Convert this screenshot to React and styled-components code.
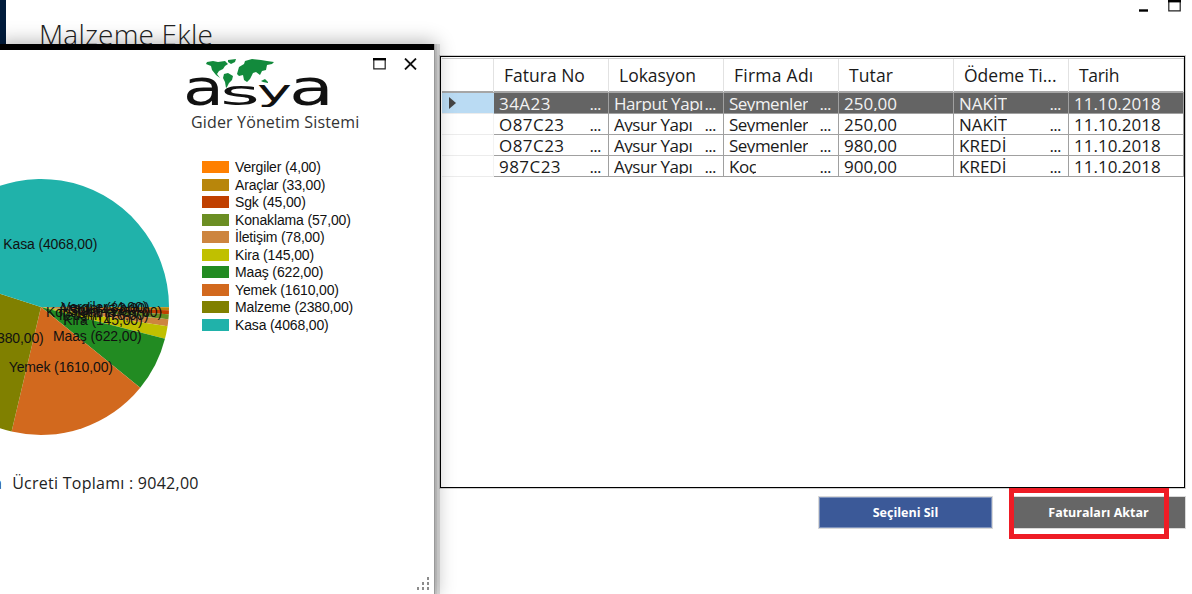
import React from "react";
import styled, { createGlobalStyle } from "styled-components";

const GlobalStyle = createGlobalStyle`
  *, *::before, *::after { box-sizing: border-box; }
  html, body { margin: 0; padding: 0; }
  body {
    background: #fff;
    color: #111;
    font-family: "Open Sans", "Noto Sans", sans-serif;
    overflow: hidden;
  }
`;

const Desktop = styled.div`
  position: relative;
  display: flex;
  width: 1192px;
  height: 594px;
  overflow: hidden;
  background: #fff;
`;

const DesktopEdge = styled.div`
  flex: none;
  width: 6px;
  background: #001b3b;
`;

const MainWindow = styled.main`
  flex: 1;
  display: flex;
  flex-direction: column;
  align-items: flex-end;
  padding-right: 7px;
`;

const MainHeader = styled.header`
  display: flex;
  align-self: stretch;
  justify-content: space-between;
  height: 56px;
  padding: 0 4px 0 33px;
`;

const MainTitle = styled.h1`
  margin: 13px 0 0;
  font-size: 28px;
  line-height: 42px;
  font-weight: 300;
  letter-spacing: 0.2px;
  color: #222;
  white-space: nowrap;
`;

const Grid = styled.section`
  flex: none;
  width: 745px;
  height: 432px;
  padding: 1px 0 0 1px;
  border: 1px solid #000;
  box-shadow: 0 0 0 1px #d0d0d0;
`;

const GridRow = styled.div`
  display: grid;
  grid-template-columns: 52px repeat(6, 115px);
  height: 21px;
  background: ${(p) => (p.$selected ? "#646464" : "#fff")};
  color: ${(p) => (p.$selected ? "#f2f2f2" : "#1a1a1a")};
`;

const GridHead = styled(GridRow)`
  height: 35px;
  border-bottom: 2px solid #a6a6a6;
  border-top: 1px solid #c8c8c8;
`;

const HeadCell = styled.div`
  padding-left: 10px;
  border-right: 1px solid #e2e2e2;
  font-size: 17.5px;
  line-height: 33px;
  letter-spacing: ${(p) => p.$spacing || 0}px;
  white-space: nowrap;
`;

const RowMarker = styled.div`
  display: flex;
  align-items: center;
  padding-left: 7px;
  background: ${(p) => (p.$selected ? "#badbf3" : "#fff")};
  border-bottom: 1px solid #ececec;
  border-right: 1px solid ${(p) => (p.$selected ? "#badbf3" : "#f3f3f3")};
`;

const Cell = styled.div`
  display: flex;
  justify-content: space-between;
  padding: 0 7px 0 5px;
  border-right: 1px solid #a0a0a0;
  border-bottom: 1px solid #a0a0a0;
  font-size: 17px;
`;

const CellText = styled.span`
  height: 18px;
  line-height: 21px;
  overflow: hidden;
  letter-spacing: ${(p) => p.$spacing || 0}px;
  white-space: pre;
`;

const Actions = styled.div`
  position: relative;
  display: flex;
  gap: 20px;
  padding-top: 9px;
`;

const ActionButton = styled.button`
  width: 173px;
  height: 31px;
  padding: 0;
  border: 1px solid ${(p) => (p.$primary ? "#7f93bd" : "#666")};
  outline: 1px solid #d9d9d9;
  background: ${(p) => (p.$primary ? "#3b5998" : "#666")};
  color: #fff;
  font: 700 12.5px/30px "Open Sans", sans-serif;
  letter-spacing: 0;
`;

const Highlight = styled.div`
  position: absolute;
  left: 190px;
  top: 0;
  width: 160px;
  height: 51px;
  border: 5px solid #ee1c25;
`;

const ReportWindow = styled.aside`
  position: absolute;
  left: 0;
  top: 44px;
  width: 434px;
  height: 550px;
  display: flex;
  flex-direction: column;
  border-top: 6px solid #000;
  background: #fff;
  box-shadow: 1px 0 0 #999, 3px 0 0 rgba(0, 0, 0, 0.06), 6px 0 0 rgba(0, 0, 0, 0.12), 0 0 18px 2px rgba(0, 0, 0, 0.3);
`;

const ReportHeader = styled.header`
  display: flex;
  height: 88px;
`;

const Brand = styled.div`
  flex: none;
  display: flex;
  flex-direction: column;
  width: 188px;
  margin-left: 182px;
  padding-top: 7px;
`;

const Tagline = styled.div`
  padding-left: 9px;
  font-size: 16px;
  line-height: 27px;
  letter-spacing: 0.15px;
  color: #333;
  white-space: nowrap;
`;

const WindowControls = styled.div`
  display: flex;
  gap: ${(p) => p.$gap}px;
  padding: ${(p) => p.$top}px 0 0 3px;
`;

const ReportBody = styled.div`
  display: flex;
  height: 328px;
`;

const Chart = styled.svg`
  flex: none;
  width: 202px;
  height: 328px;
  font-family: "Liberation Sans", Arial, sans-serif;
  font-size: 14px;
`;

const Legend = styled.ul`
  display: flex;
  flex-direction: column;
  margin: 20.5px 0 0;
  padding: 0;
  list-style: none;
`;

const LegendItem = styled.li`
  display: flex;
  align-items: center;
  gap: 6px;
  height: 17.5px;
  font: 14px/18.5px "Liberation Sans", Arial, sans-serif;
  letter-spacing: -0.15px;
  white-space: nowrap;
  &::before {
    content: "";
    width: 27px;
    height: 12px;
    background: ${(p) => p.$color};
  }
`;

const Total = styled.div`
  display: flex;
  gap: 10px;
  margin-left: -7px;
  padding-top: 3px;
  font-size: 16px;
  line-height: 28px;
  letter-spacing: 0.26px;
  color: #222;
  white-space: nowrap;
`;

const ResizeGrip = styled.svg`
  align-self: flex-end;
  margin: auto 4px 4px 0;
`;

const expenses = [
  { name: "Vergiler", value: 4, color: "#ff8000" },
  { name: "Araçlar", value: 33, color: "#b8860b" },
  { name: "Sgk", value: 45, color: "#c04000" },
  { name: "Konaklama", value: 57, color: "#6b8e23" },
  { name: "İletişim", value: 78, color: "#cd853f" },
  { name: "Kira", value: 145, color: "#c0c000" },
  { name: "Maaş", value: 622, color: "#228b22" },
  { name: "Yemek", value: 1610, color: "#d2691e" },
  { name: "Malzeme", value: 2380, color: "#808000" },
  { name: "Kasa", value: 4068, color: "#20b2aa" },
];

const caption = (e) => `${e.name} (${e.value},00)`;

const columns = [
  { title: "Fatura No", headSpacing: 0, spacing: 0.45, truncated: true },
  { title: "Lokasyon", headSpacing: 0, spacing: -0.45, truncated: true },
  { title: "Firma Adı", headSpacing: 0.25, spacing: -0.5, truncated: true },
  { title: "Tutar", headSpacing: 0.1, spacing: 0, truncated: false },
  { title: "Ödeme Ti...", headSpacing: 0, spacing: 0, truncated: true },
  { title: "Tarih", headSpacing: -0.3, spacing: 0, truncated: false },
];

const invoices = [
  ["34A23", "Harput Yapı", "Seymenler", "250,00", "NAKİT", "11.10.2018"],
  ["O87C23", "Aysur Yapı", "Seymenler", "250,00", "NAKİT", "11.10.2018"],
  ["O87C23", "Aysur Yapı", "Seymenler", "980,00", "KREDİ", "11.10.2018"],
  ["987C23", "Aysur Yapı", "Koç", "900,00", "KREDİ", "11.10.2018"],
];

function ExpensePie() {
  const cx = 41;
  const cy = 169;
  const r = 128;
  const total = expenses.reduce((s, e) => s + e.value, 0);
  let sum = 0;
  const slices = expenses.map((e) => {
    const a = (sum / total) * Math.PI * 2;
    sum += e.value;
    const b = (sum / total) * Math.PI * 2;
    return { ...e, a, b, mid: (a + b) / 2 };
  });
  const pt = (t, d) => [cx + Math.cos(t) * d, cy + Math.sin(t) * d];
  return (
    <Chart viewBox="0 0 202 328">
      {slices.map((s) => (
        <path
          key={s.name}
          fill={s.color}
          d={`M${cx} ${cy}L${pt(s.a, r)}A${r} ${r} 0 0 1 ${pt(s.b, r)}Z`}
        />
      ))}
      {slices.map((s) => {
        const [x, y] = pt(s.mid, r / 2);
        return (
          <text key={s.name} x={x - 0.8} y={y + 4.9} textAnchor="middle" letterSpacing="-0.13" fill="#111">
            {caption(s)}
          </text>
        );
      })}
    </Chart>
  );
}

function AsyaLogo() {
  return (
    <svg width="150" height="52" viewBox="182 57 150 52">
      <g fill="#128a3c">
        <path d="M207 62l6-1 5 1 7-1 3 3-3 2-2 3-4 2-2 3 3 4-4-3-4-5-1-4-5-2z" />
        <path d="M228 60l8-1-1 3-4 2-3-2z" />
        <path d="M224 74l4-1 5 3-1 4-3 3-2 4-1 1-1-6-2-4z" />
        <path d="M237 74l2-7 5-3 1-3 7-2 9 1 6 1 7 1-2 2-5 1-1 5-4 1-2 4-4-3-3 1-3 6-3 3-3-2-1-5-4 1z" />
        <path d="M261 81l4-2 3 3v1l-5-1z" />
      </g>
      <g fill="#111" fontFamily="DejaVu Sans">
        <text y="105">
          <tspan x="183" fontSize="50" textLength="41" lengthAdjust="spacingAndGlyphs">a</tspan>
          <tspan x="220" fontSize="34" textLength="40" lengthAdjust="spacingAndGlyphs">s</tspan>
          <tspan x="257" y="101" fontSize="28" textLength="35" lengthAdjust="spacingAndGlyphs">y</tspan>
          <tspan x="289" y="105" fontSize="50" textLength="45" lengthAdjust="spacingAndGlyphs">a</tspan>
        </text>
      </g>
    </svg>
  );
}

const MaximizeIcon = () => (
  <svg width="13" height="12" viewBox="0 0 13 12">
    <path d="M.8 1v9.8h11.4V1" fill="none" stroke="#222" strokeWidth="1.2" />
    <path d="M0 1.2h13" stroke="#000" strokeWidth="2.4" />
  </svg>
);

const MinimizeIcon = () => (
  <svg width="9" height="12" viewBox="0 0 9 12">
    <path d="M0 10.5h9" stroke="#000" strokeWidth="2.4" />
  </svg>
);

const CloseIcon = () => (
  <svg width="13" height="12" viewBox="0 0 13 12">
    <path d="M1 .5l11 11M12 .5l-11 11" stroke="#111" strokeWidth="1.8" />
  </svg>
);

export default function App() {
  return (
    <Desktop>
      <GlobalStyle />
      <DesktopEdge />
      <MainWindow>
        <MainHeader>
          <MainTitle>Malzeme Ekle</MainTitle>
          <WindowControls $gap={20} $top={0}>
            <MinimizeIcon />
            <MaximizeIcon />
          </WindowControls>
        </MainHeader>
        <Grid>
          <GridHead>
            <HeadCell />
            {columns.map((c) => (
              <HeadCell key={c.title} $spacing={c.headSpacing}>{c.title}</HeadCell>
            ))}
          </GridHead>
          {invoices.map((row, i) => (
            <GridRow key={i} $selected={i === 0}>
              <RowMarker $selected={i === 0}>
                {i === 0 && (
                  <svg width="7" height="12" viewBox="0 0 7 12">
                    <path d="M0 0l7 6-7 6z" fill="#444" />
                  </svg>
                )}
              </RowMarker>
              {row.map((value, c) => (
                <Cell key={c}>
                  <CellText $spacing={columns[c].spacing}>{value}</CellText>
                  {columns[c].truncated && <CellText $spacing={-0.6}>...</CellText>}
                </Cell>
              ))}
            </GridRow>
          ))}
        </Grid>
        <Actions>
          <ActionButton $primary>Seçileni Sil</ActionButton>
          <ActionButton>Faturaları Aktar</ActionButton>
          <Highlight />
        </Actions>
      </MainWindow>
      <ReportWindow>
        <ReportHeader>
          <Brand>
            <AsyaLogo />
            <Tagline>Gider Yönetim Sistemi</Tagline>
          </Brand>
          <WindowControls $gap={18} $top={8}>
            <MaximizeIcon />
            <CloseIcon />
          </WindowControls>
        </ReportHeader>
        <ReportBody>
          <ExpensePie />
          <Legend>
            {expenses.map((e) => (
              <LegendItem key={e.name} $color={e.color}>{caption(e)}</LegendItem>
            ))}
          </Legend>
        </ReportBody>
        <Total>
          <span>a</span>
          <span>Ücreti Toplamı : 9042,00</span>
        </Total>
        <ResizeGrip width="14" height="14" viewBox="0 0 14 14" fill="#8c8c8c">
          <path d="M11 1h2v3h-2zM6 6h2v3H6zM11 6h2v3h-2zM1 11h2v3H1zM6 11h2v3H6zM11 11h2v3h-2z" />
        </ResizeGrip>
      </ReportWindow>
    </Desktop>
  );
}
